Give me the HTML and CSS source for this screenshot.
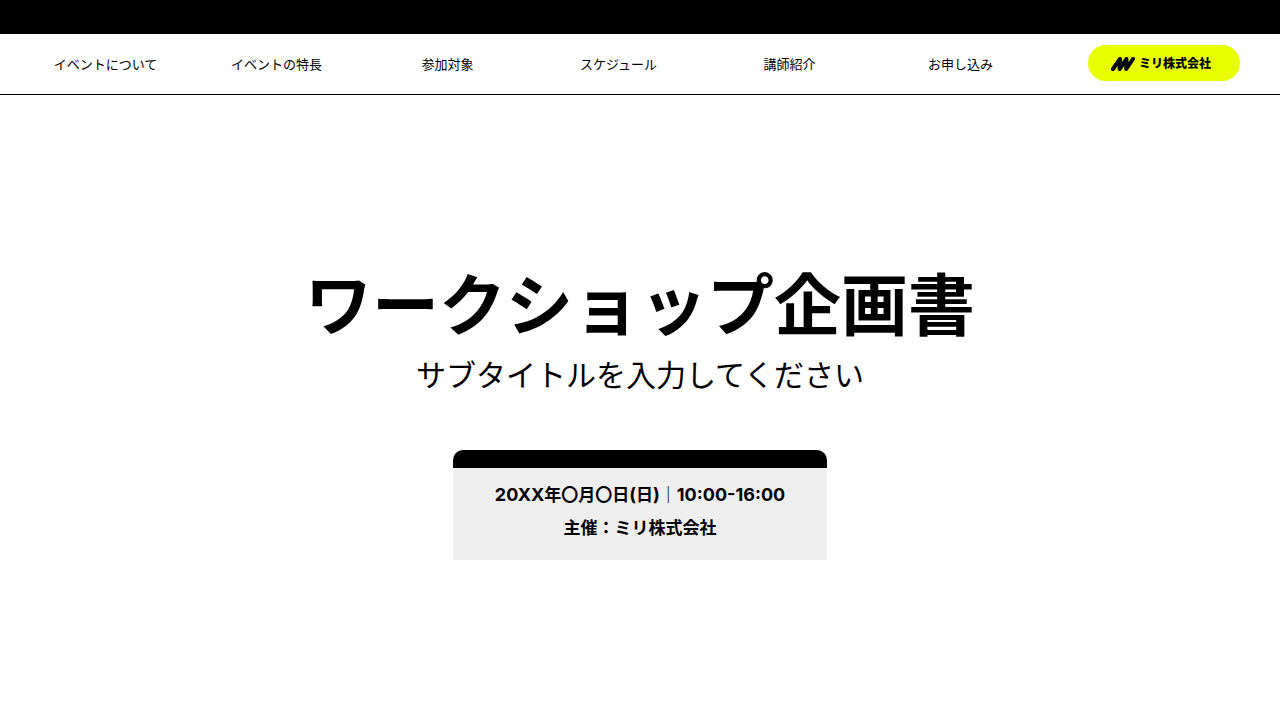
FILE: index.html
```html
<!DOCTYPE html>
<html lang="ja">
<head>
<meta charset="utf-8">
<meta name="viewport" content="width=device-width, initial-scale=1">
<title>ワークショップ企画書</title>
<link rel="stylesheet" href="styles.css">
</head>
<body class="page">
<header class="header">
  <nav class="nav">
    <a class="nav-link" href="#about">イベントについて</a>
    <a class="nav-link" href="#features">イベントの特長</a>
    <a class="nav-link" href="#target">参加対象</a>
    <a class="nav-link" href="#schedule">スケジュール</a>
    <a class="nav-link" href="#lecturers">講師紹介</a>
    <a class="nav-link" href="#apply">お申し込み</a>
  </nav>
  <a class="brand" href="#top">
    <svg class="brand-mark" viewBox="0 0 24 14" aria-hidden="true"><path d="M2 12 9 2 8.600 12 15.500 2 15.200 12 22 2"/></svg>
    <span>ミリ株式会社</span>
  </a>
</header>
<main class="hero">
  <h1 class="title">ワークショップ企画書</h1>
  <p class="subtitle">サブタイトルを入力してください</p>
  <section class="card">
    <p class="card-line"><span class="latin">20XX</span>年〇月〇日<span class="latin">(</span>日<span class="latin">)</span>｜<span class="latin">10:00-16:00</span></p>
    <p class="card-line">主催：ミリ株式会社</p>
  </section>
</main>
</body>
</html>
```
FILE: styles.css
```css
* { box-sizing: border-box; }
.page {
  margin: 0;
  min-height: 100vh;
  display: flex;
  flex-direction: column;
  background: #fff;
  color: #000;
  font-family: Inter, "Noto Sans CJK JP", sans-serif;
}
.header {
  display: flex;
  align-items: center;
  gap: 42px;
  padding: 11px 40px 13px 20px;
  border-top: 34px solid #000;
  border-bottom: 1px solid #000;
}
.nav {
  flex: 1;
  display: grid;
  grid-template-columns: repeat(6, 1fr);
}
.nav-link {
  padding-top: 1px;
  color: #000;
  font-size: 13px;
  font-weight: 400;
  line-height: 20px;
  text-align: center;
  text-decoration: none;
}
.brand {
  display: flex;
  align-items: center;
  gap: 4px;
  padding: 9px 29px 7px 23px;
  border-radius: 18px;
  background: #e8ff00;
  color: #000;
  font-size: 12px;
  font-weight: 900;
  line-height: 20px;
  text-decoration: none;
  white-space: nowrap;
}
.brand-mark {
  width: 24px;
  height: 14px;
  fill: none;
  stroke: #000;
  stroke-width: 4;
  stroke-linecap: round;
  stroke-linejoin: round;
}
.hero {
  flex: 1;
  display: flex;
  flex-direction: column;
  align-items: center;
  justify-content: center;
  padding: 10px 20px 0;
}
.title {
  margin: 0;
  font-size: 67px;
  font-weight: 700;
  line-height: 82px;
  text-align: center;
}
.subtitle {
  margin: 8px 0 55px;
  font-size: 30px;
  font-weight: 400;
  line-height: 40px;
  text-align: center;
}
.card {
  padding: 10px 42px 15px;
  border-top: 18px solid #000;
  border-radius: 10px 10px 0 0;
  background: #eee;
  text-align: center;
}
.card-line {
  margin: 0;
  font-size: 17px;
  font-weight: 700;
  line-height: 33px;
}
.latin { font-size: 18px; }
```
